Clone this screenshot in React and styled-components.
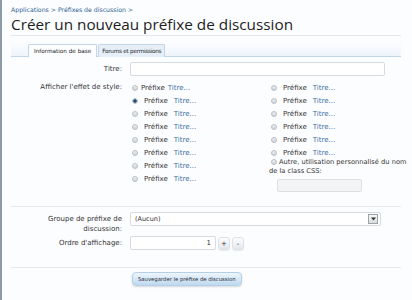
import styled, { createGlobalStyle } from "styled-components";

const GlobalStyle = createGlobalStyle`
    html, body {
        margin: 0;
        padding: 0;
        background: #fcfdff;
    }
    body {
        font-family: "DejaVu Sans", Tahoma, sans-serif;
        color: #333;
    }
`;

const styleRows = [
    [{ plain: true }, {}],
    [{ checked: true }, {}],
    [{}, {}],
    [{}, {}],
    [{}, {}],
    [{}, {}],
    [{}, null],
    [{}, null],
];

function Radio({ checked }) {
    return <RadioDot checked={checked} />;
}

function PrefixOption({ plain, checked }) {
    return (
        <Option>
            <Radio checked={checked} />
            <Prefix plain={plain}>Préfixe</Prefix>
            <TitleHint>Titre...</TitleHint>
        </Option>
    );
}

function App() {
    const left = styleRows.map((r) => r[0]);
    const right = styleRows.map((r) => r[1]).filter(Boolean);

    return (
        <Page>
            <GlobalStyle />
            <Breadcrumb>
                <a>Applications</a> &gt; <a>Préfixes de discussion</a> &gt;
            </Breadcrumb>
            <Heading>Créer un nouveau préfixe de discussion</Heading>

            <TabBar>
                <Tab active>Information de base</Tab>
                <Tab>Forums et permissions</Tab>
            </TabBar>

            <Form>
                <Row mb="6px">
                    <Label>Titre:</Label>
                    <TextInput width="255px" />
                </Row>

                <Row top>
                    <Label>Afficher l'effet de style:</Label>
                    <StyleGrid>
                        <Column>
                            {left.map((o, i) => (
                                <PrefixOption key={i} {...o} />
                            ))}
                        </Column>
                        <Column>
                            {right.map((o, i) => (
                                <PrefixOption key={i} {...o} />
                            ))}
                            <Custom>
                                <Radio />
                                Autre, utilisation personnalisé du nom de la class CSS:
                            </Custom>
                            <CssInput />
                        </Column>
                    </StyleGrid>
                </Row>

                <Divider />

                <Row top mb="2px">
                    <Label pad>
                        Groupe de préfixe de
                        <br />
                        discussion:
                    </Label>
                    <Select>
                        <span>(Aucun)</span>
                        <SelectArrow>
                            <svg width="5" height="4" viewBox="0 0 5 4">
                                <path d="M0 0.5h5L2.5 3.5z" fill="#333" />
                            </svg>
                        </SelectArrow>
                    </Select>
                </Row>

                <Row>
                    <Label>Ordre d'affichage:</Label>
                    <Spinner>
                        <NumberInput>1</NumberInput>
                        <SpinButton>+</SpinButton>
                        <SpinButton>-</SpinButton>
                    </Spinner>
                </Row>

                <Divider bottom />

                <Submit>
                    <SaveButton>Sauvegarder le préfixe de discussion</SaveButton>
                </Submit>
            </Form>
        </Page>
    );
}

const Page = styled.div`
    min-height: 300px;
    box-sizing: border-box;
    border-left: 2px solid #8d9ba6;
    padding: 6px 11px 0 9px;
`;

const Breadcrumb = styled.div`
    font-size: 6.2px;
    color: #3f6a9b;
    line-height: 8px;

    a {
        color: #2f5d93;
    }
`;

const Heading = styled.h1`
    margin: 0;
    padding-bottom: 1px;
    font-family: "Open Sans", sans-serif;
    font-weight: 400;
    font-size: 15.3px;
    line-height: 20px;
    color: #1d1d1d;
    border-bottom: 1px solid #e4e8ec;
`;

const TabBar = styled.div`
    display: flex;
    margin-top: 6px;
    padding: 0 0 0 17px;
    height: 14px;
    align-items: flex-end;
    border-bottom: 1px solid #c2d6e8;
    background: linear-gradient(#fcfdff, #eef4fa);
`;

const Tab = styled.div`
    height: 13px;
    box-sizing: border-box;
    padding: 0 ${({ active }) => (active ? "5px" : "3px")};
    margin-bottom: -1px;
    font-size: 5.7px;
    letter-spacing: ${({ active }) => (active ? "0" : "-0.25px")};
    line-height: 12px;
    color: #222;
    border: 1px solid #c2d6e8;
    border-bottom: none;
    border-radius: 2px 2px 0 0;
    background: ${({ active }) => (active ? "#fcfdff" : "#e6eff8")};
    & + & {
        margin-left: 1px;
    }
`;

const Form = styled.div`
    padding-top: 5px;
`;

const Row = styled.div`
    display: grid;
    grid-template-columns: 111px 1fr;
    column-gap: 8px;
    align-items: ${({ top }) => (top ? "start" : "center")};
    margin-bottom: ${({ mb }) => mb || "0"};
`;

const Label = styled.div`
    text-align: right;
    font-size: 7px;
    line-height: 10px;
    color: #333;
    padding-top: ${({ pad }) => (pad ? "2px" : "0")};
`;

const TextInput = styled.div`
    width: ${({ width }) => width};
    height: 14px;
    box-sizing: border-box;
    background: #fff;
    border: 1px solid #d6dbe0;
    border-radius: 2px;
`;

const StyleGrid = styled.div`
    display: grid;
    grid-template-columns: 139px 1fr;
    margin-top: -1px;
`;

const Column = styled.div`
    display: flex;
    flex-direction: column;
`;

const Option = styled.div`
    display: flex;
    align-items: center;
    height: 13px;
    font-size: 7px;
`;

const RadioDot = styled.span`
    flex-shrink: 0;
    display: inline-block;
    vertical-align: -1px;
    width: 6px;
    height: 6px;
    box-sizing: border-box;
    border-radius: 50%;
    border: 1px solid #b9bec4;
    background: ${({ checked }) =>
        checked
            ? "radial-gradient(circle, #23497a 0 1.5px, #dfe6ee 2px)"
            : "linear-gradient(#eef0f2, #cfd4d9)"};
    margin: 0 3px 0 2px;
`;

const Prefix = styled.span`
    padding: ${({ plain }) => (plain ? "0 3px 0 0" : "0 6px 0 3px")};
    color: #333;
`;

const TitleHint = styled.span`
    color: #3b6fa5;
`;

const Custom = styled.div`
    width: 140px;
    font-size: 6.7px;
    line-height: 9px;
    color: #333;
    margin-top: -1px;

    ${RadioDot} {
        margin: 0 2px 0 2px;
    }
`;

const CssInput = styled.div`
    width: 85px;
    height: 13px;
    box-sizing: border-box;
    margin: 3px 0 0 8px;
    border: 1px solid #dde1e5;
    background: #f3f4f6;
    border-radius: 2px;
`;

const Divider = styled.div`
    height: 1px;
    background: #e6e9ed;
    margin: ${({ bottom }) => (bottom ? "17px 0 4px" : "14px 0 5px")};
`;

const Select = styled.div`
    width: 251px;
    height: 14px;
    box-sizing: border-box;
    display: flex;
    align-items: center;
    justify-content: space-between;
    padding: 0 2px 0 4px;
    font-size: 6.5px;
    color: #333;
    background: #fff;
    border: 1px solid #d6dbe0;
    border-radius: 2px;
`;

const SelectArrow = styled.span`
    display: flex;
    align-items: center;
    justify-content: center;
    width: 8px;
    height: 8px;
    border: 1px solid #9ba3ab;
    background: linear-gradient(#f8f8f8, #dcdcdc);
`;

const Spinner = styled.div`
    display: flex;
    align-items: center;
    gap: 2px;
`;

const NumberInput = styled.div`
    width: 86px;
    height: 14px;
    box-sizing: border-box;
    padding-right: 4px;
    text-align: right;
    font-size: 7px;
    line-height: 12px;
    background: #fff;
    border: 1px solid #d6dbe0;
    border-radius: 2px;
`;

const SpinButton = styled.div`
    width: 12px;
    height: 13px;
    box-sizing: border-box;
    text-align: center;
    font-size: 7px;
    line-height: 12px;
    color: #333;
    border: 1px solid #dde2e7;
    border-radius: 3px;
    background: linear-gradient(#fbfcfd, #e3e8ee);
    box-shadow: 0 1px 1px rgba(0, 0, 0, 0.08);
`;

const Submit = styled.div`
    display: flex;
    padding-left: 121px;
`;

const SaveButton = styled.div`
    height: 12px;
    padding: 0 5px;
    font-size: 5.3px;
    line-height: 12px;
    color: #1f2a35;
    border: 1px solid #b4cfe6;
    border-radius: 4px;
    background: linear-gradient(#eef6fc, #bed9ef);
    box-shadow: 0 1px 2px rgba(0, 0, 0, 0.15);
`;

export default App;
